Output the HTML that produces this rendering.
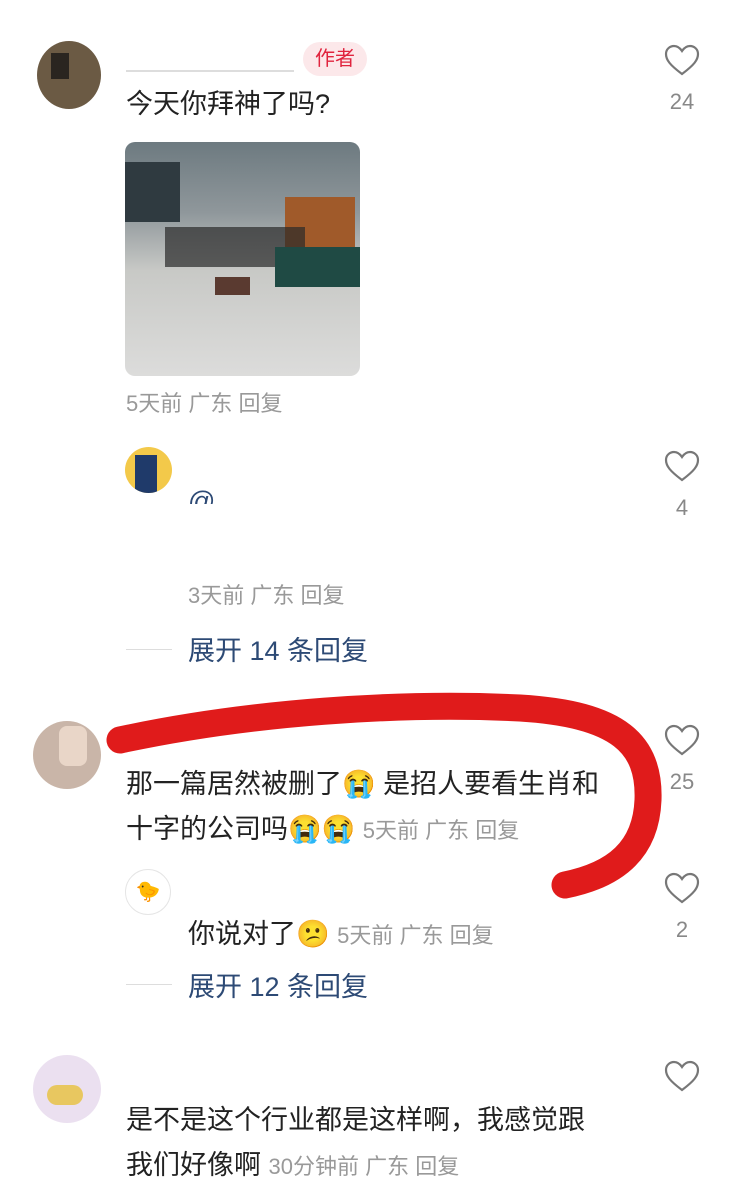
<!DOCTYPE html>
<html><head><meta charset="utf-8"><style>
body{margin:0;width:733px;height:1200px;background:#fff;position:relative;overflow:hidden;font-family:"Liberation Sans","Noto Sans CJK SC",sans-serif;}
.a{position:absolute}
.t{font-size:27px;color:#222;white-space:nowrap;line-height:34px}
.m{font-size:22px;color:#999;white-space:nowrap;line-height:30px}
.b{font-size:27px;color:#2d4a75;white-space:nowrap;line-height:34px}
.av{position:absolute;border-radius:50%;overflow:hidden}
.n{font-size:22px;color:#888;text-align:center;width:40px}
.line{position:absolute;height:1px;background:#ddd;width:46px}
</style></head><body>
<div class="av" style="left:37px;top:41px;width:64px;height:68px;background:#6b5a44"><div class="a" style="left:14px;top:12px;width:18px;height:26px;background:#2a2520"></div></div>
<div class="a" style="left:126px;top:58px;width:168px;height:12px;border-bottom:2px solid #ddd"></div>
<div class="a" style="left:303px;top:42px;width:64px;height:34px;border-radius:17px;background:#fce8ea;color:#e0243e;font-size:20px;text-align:center;line-height:34px">作者</div>
<div class="a t" style="left:126px;top:87px">今天你拜神了吗?</div>
<div class="a" style="left:125px;top:142px;width:235px;height:234px;border-radius:10px;background:linear-gradient(#6d7a80 0,#8f979b 30%,#c8c9c6 55%,#dcdcdb 100%);overflow:hidden">
<div class="a" style="left:0;top:20px;width:55px;height:60px;background:#2f3a40"></div>
<div class="a" style="left:160px;top:55px;width:70px;height:60px;background:#a05a2a"></div>
<div class="a" style="left:40px;top:85px;width:140px;height:40px;background:#2a2a2a;opacity:.7"></div>
<div class="a" style="left:150px;top:105px;width:85px;height:40px;background:#1f4a44"></div>
<div class="a" style="left:90px;top:135px;width:35px;height:18px;background:#5a3a30"></div>
</div>
<div class="a m" style="left:126px;top:389px">5天前 广东 回复</div>
<div class="av" style="left:125px;top:447px;width:47px;height:46px;background:#f3c94a"><div class="a" style="left:10px;top:8px;width:22px;height:40px;background:#1f3a6a"></div></div>
<div class="a b" style="left:188px;top:484px;height:20px;overflow:hidden;color:#2d4a75">@</div>
<div class="a m" style="left:188px;top:581px">3天前 广东 回复</div>
<div class="line" style="left:126px;top:649px"></div>
<div class="a b" style="left:188px;top:634px">展开 14 条回复</div>
<div class="av" style="left:33px;top:721px;width:68px;height:68px;background:#c9b5a8"><div class="a" style="left:26px;top:5px;width:28px;height:40px;background:#e9d6c8;border-radius:8px"></div></div>
<div class="a t" style="left:126px;top:767px">那一篇居然被删了😭 是招人要看生肖和</div>
<div class="a t" style="left:126px;top:812px">十字的公司吗😭😭 <span class="m">5天前 广东 回复</span></div>
<div class="av" style="left:125px;top:869px;width:46px;height:46px;background:#fff;border:1px solid #e5e5e5;box-sizing:border-box;text-align:center;line-height:44px;color:#e8c34a;font-size:20px">🐤</div>
<div class="a t" style="left:188px;top:917px">你说对了😕 <span class="m">5天前 广东 回复</span></div>
<div class="line" style="left:126px;top:984px"></div>
<div class="a b" style="left:188px;top:970px">展开 12 条回复</div>
<div class="av" style="left:33px;top:1055px;width:68px;height:68px;background:#ebe0f0"><div class="a" style="left:14px;top:30px;width:36px;height:20px;background:#e8c760;border-radius:10px"></div></div>
<div class="a t" style="left:126px;top:1103px">是不是这个行业都是这样啊，我感觉跟</div>
<div class="a t" style="left:126px;top:1148px">我们好像啊 <span class="m">30分钟前 广东 回复</span></div>
<svg class="a" style="left:0;top:0" width="733" height="1200">
<defs><path id="h" d="M16 28 C4 19 0 14 0 8 C0 3 4 0 8 0 C11 0 14 2 16 5 C18 2 21 0 24 0 C28 0 32 3 32 8 C32 14 28 19 16 28Z" fill="none" stroke="#777" stroke-width="2.2"/></defs>
<use href="#h" transform="translate(666,46)"/>
<use href="#h" transform="translate(666,452)"/>
<use href="#h" transform="translate(666,726)"/>
<use href="#h" transform="translate(666,874)"/>
<use href="#h" transform="translate(666,1062)"/>
<path d="M120 740 C250 712 400 702 520 708 C620 714 650 745 648 800 C646 850 615 875 565 885" fill="none" stroke="#e01b1b" stroke-width="27" stroke-linecap="round"/>
</svg>
<div class="a n" style="left:662px;top:89px">24</div>
<div class="a n" style="left:662px;top:495px">4</div>
<div class="a n" style="left:662px;top:769px">25</div>
<div class="a n" style="left:662px;top:917px">2</div>
</body></html>
